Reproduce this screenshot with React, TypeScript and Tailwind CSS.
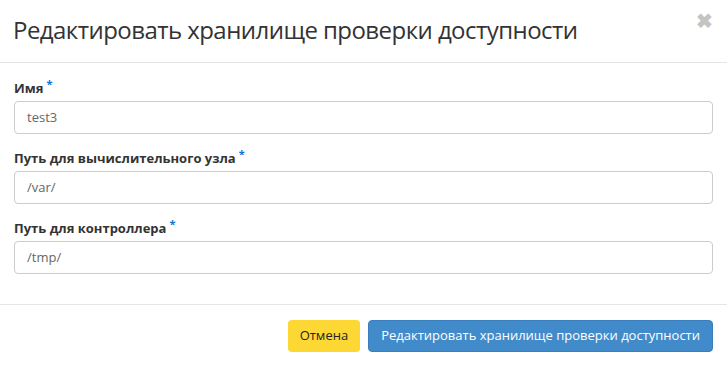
import React from "react";

function Field({ label, value }: { label: string; value: string }) {
  return (
    <div className="flex flex-col">
      <label className="text-[13px] font-bold text-[#333] leading-[18px] mb-[4px]">
        {label}
        <span className="text-[#0b74d5] text-[11px] align-top relative top-[-4px] ml-[3px]">*</span>
      </label>
      <div className="h-[33px] border border-[#cccccc] rounded-[4px] flex items-center px-[12px] text-[13px] text-[#666] bg-white">
        {value}
      </div>
    </div>
  );
}

export default function App() {
  return (
    <div className="w-[727px] h-[365px] bg-white font-['Open_Sans',sans-serif] text-[#333]">
      <div className="h-[63px] border-b border-[#e5e5e5] flex items-center justify-between pl-[13px] pr-[14px]">
        <h4 className="text-[24px] font-normal text-[#333] tracking-[-0.55px] leading-none pb-[2px]">
          Редактировать хранилище проверки доступности
        </h4>
        <span className="text-[#c4c4c4] text-[20px] font-bold leading-none -mt-[20px]">✖</span>
      </div>
      <div className="px-[14px] pt-[16px] pb-[30px] flex flex-col gap-[15px]">
        <Field label="Имя" value="test3" />
        <Field label="Путь для вычислительного узла" value="/var/" />
        <Field label="Путь для контроллера" value="/tmp/" />
      </div>
      <div className="border-t border-[#e5e5e5] flex justify-end gap-[8px] px-[14px] pt-[15px]">
        <button className="h-[32px] px-[12px] rounded-[4px] bg-[#fdd835] text-[#222] text-[13px]">Отмена</button>
        <button className="h-[32px] px-[12px] rounded-[4px] bg-[#428bca] text-white text-[13px] border border-[#3a7fbd]">
          Редактировать хранилище проверки доступности
        </button>
      </div>
    </div>
  );
}
